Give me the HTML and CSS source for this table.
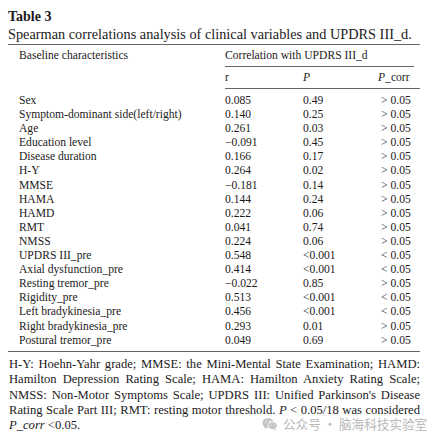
FILE: index.html
```html
<!DOCTYPE html>
<html lang="en">
<head>
    <meta charset="UTF-8">
    <title>Table 3</title>
    <link rel="stylesheet" href="styles.css">
</head>
<body>

<div class="page">
    <h2 class="table-label">Table 3</h2>
    <p class="table-caption">Spearman correlations analysis of clinical variables and UPDRS III_d.</p>

    <table class="data-table">
        <colgroup>
            <col class="col-name">
            <col class="col-r">
            <col class="col-p">
            <col class="col-corr">
        </colgroup>
        <thead>
            <tr class="head-top">
                <th rowspan="2" class="name-head">Baseline characteristics</th>
                <th colspan="3" class="group-head"><div class="group-title">Correlation with UPDRS III_d</div></th>
            </tr>
            <tr class="head-sub">
                <th>r</th>
                <th><i>P</i></th>
                <th><i>P</i>_corr</th>
            </tr>
        </thead>
        <tbody>
            <tr><td>Sex</td><td>0.085</td><td>0.49</td><td>&gt; 0.05</td></tr>
            <tr><td>Symptom-dominant side(left/right)</td><td>0.140</td><td>0.25</td><td>&gt; 0.05</td></tr>
            <tr><td>Age</td><td>0.261</td><td>0.03</td><td>&gt; 0.05</td></tr>
            <tr><td>Education level</td><td>&minus;0.091</td><td>0.45</td><td>&gt; 0.05</td></tr>
            <tr><td>Disease duration</td><td>0.166</td><td>0.17</td><td>&gt; 0.05</td></tr>
            <tr><td>H-Y</td><td>0.264</td><td>0.02</td><td>&gt; 0.05</td></tr>
            <tr><td>MMSE</td><td>&minus;0.181</td><td>0.14</td><td>&gt; 0.05</td></tr>
            <tr><td>HAMA</td><td>0.144</td><td>0.24</td><td>&gt; 0.05</td></tr>
            <tr><td>HAMD</td><td>0.222</td><td>0.06</td><td>&gt; 0.05</td></tr>
            <tr><td>RMT</td><td>0.041</td><td>0.74</td><td>&gt; 0.05</td></tr>
            <tr><td>NMSS</td><td>0.224</td><td>0.06</td><td>&gt; 0.05</td></tr>
            <tr><td>UPDRS III_pre</td><td>0.548</td><td>&lt;0.001</td><td>&lt; 0.05</td></tr>
            <tr><td>Axial dysfunction_pre</td><td>0.414</td><td>&lt;0.001</td><td>&lt; 0.05</td></tr>
            <tr><td>Resting tremor_pre</td><td>&minus;0.022</td><td>0.85</td><td>&gt; 0.05</td></tr>
            <tr><td>Rigidity_pre</td><td>0.513</td><td>&lt;0.001</td><td>&lt; 0.05</td></tr>
            <tr><td>Left bradykinesia_pre</td><td>0.456</td><td>&lt;0.001</td><td>&lt; 0.05</td></tr>
            <tr><td>Right bradykinesia_pre</td><td>0.293</td><td>0.01</td><td>&gt; 0.05</td></tr>
            <tr><td>Postural tremor_pre</td><td>0.049</td><td>0.69</td><td>&gt; 0.05</td></tr>
        </tbody>
    </table>

    <p class="footnote">H-Y: Hoehn-Yahr grade; MMSE: the Mini-Mental State Examination; HAMD: Hamilton Depression Rating Scale; HAMA: Hamilton Anxiety Rating Scale; NMSS: Non-Motor Symptoms Scale; UPDRS III: Unified Parkinson's Disease Rating Scale Part III; RMT: resting motor threshold. <i>P</i> &lt; 0.05/18 was considered <i>P</i>_<i>corr</i> &lt;0.05.</p>

    <div class="watermark">
        <svg class="wm-icon" width="16" height="14" viewBox="0 0 16 14">
            <ellipse cx="6" cy="6" rx="5.6" ry="4.8" fill="#c4c4c4"/>
            <path d="M3 9.5 L2.4 12 L5.2 10.4 Z" fill="#c4c4c4"/>
            <ellipse cx="10.6" cy="8.6" rx="4.6" ry="3.9" fill="#c4c4c4" stroke="#fff" stroke-width="0.9"/>
            <path d="M13 11.6 L13.8 13.6 L11.4 12.2 Z" fill="#c4c4c4"/>
            <circle cx="4.2" cy="4.8" r="0.7" fill="#fff"/>
            <circle cx="7.6" cy="4.8" r="0.7" fill="#fff"/>
            <circle cx="9.2" cy="8" r="0.55" fill="#fff"/>
            <circle cx="12.1" cy="8" r="0.55" fill="#fff"/>
        </svg>
        <span>公众号 · 脑海科技实验室</span>
    </div>
</div>

</body>
</html>
```

FILE: styles.css
```css
/* General Styles */
body {
    margin: 0;
    padding: 0;
    background-color: #fff;
    color: #1c1a1b;
    font-family: "Liberation Serif", "Times New Roman", serif;
}

.page {
    position: relative;
    width: 428px;
    height: 442px;
    padding: 0 8px;
    box-sizing: border-box;
}

.table-label {
    margin: 0;
    padding-top: 9px;
    font-size: 14px;
    line-height: 16px;
    font-weight: bold;
}

.table-caption {
    margin: 0;
    font-size: 14.3px;
    line-height: 18px;
}

/* Table */
.data-table {
    width: 412px;
    margin-top: 1px;
    border-collapse: collapse;
    border-top: 1.5px solid #666;
    border-bottom: 1.5px solid #666;
    font-size: 11.6px;
}

.col-name {
    width: 217px;
}

.col-r {
    width: 78px;
}

.col-p {
    width: 75px;
}

.data-table th {
    font-weight: normal;
    text-align: left;
    padding: 0;
}

.name-head {
    padding-left: 11px !important;
    vertical-align: top;
    padding-top: 4px !important;
    line-height: 14px;
}

.group-head {
    padding-top: 4px !important;
    line-height: 14px;
}

.group-title {
    margin-right: 6px;
    padding-bottom: 3px;
    border-bottom: 1px solid #666;
}

.head-sub th {
    height: 21px;
    line-height: 14px;
    vertical-align: middle;
    border-bottom: 1.5px solid #666;
}

.data-table td {
    padding: 0;
    line-height: 14.1px;
    white-space: nowrap;
}

.data-table td:first-child {
    padding-left: 11px;
}

.data-table td:last-child {
    padding-left: 3px;
}

.data-table tbody tr:first-child td {
    padding-top: 5px;
}

.data-table tbody tr:last-child td {
    padding-bottom: 3px;
}

/* Footnote */
.footnote {
    margin: 5px 0 0 1px;
    font-size: 12.6px;
    line-height: 15.4px;
    text-align: justify;
}

.watermark {
    position: absolute;
    left: 262px;
    top: 417px;
    display: flex;
    align-items: center;
    gap: 5px;
    color: #b8b8b8;
    font-family: "Noto Sans CJK SC", sans-serif;
    font-size: 12.6px;
    line-height: 14px;
}

.wm-icon {
    display: block;
}
```
